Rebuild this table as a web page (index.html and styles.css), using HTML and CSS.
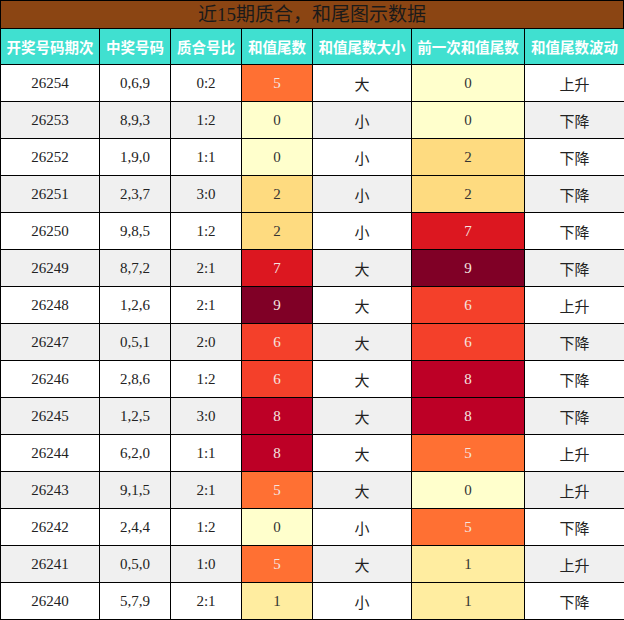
FILE: index.html
```html
<!DOCTYPE html>
<html lang="zh">
<head>
<meta charset="utf-8">
<link rel="stylesheet" href="styles.css">
</head>
<body>
<div class="wrap">
  <div class="title">近15期质合，和尾图示数据</div>
  <table class="grid">
    <colgroup>
      <col class="c1"><col class="c2"><col class="c3"><col class="c4"><col class="c5"><col class="c6"><col class="c7">
    </colgroup>
    <thead>
      <tr><th>开奖号码期次</th><th>中奖号码</th><th>质合号比</th><th>和值尾数</th><th>和值尾数大小</th><th>前一次和值尾数</th><th>和值尾数波动</th></tr>
    </thead>
    <tbody>
      <tr><td>26254</td><td>0,6,9</td><td>0:2</td><td class="v5">5</td><td class="cn">大</td><td class="v0">0</td><td class="cn">上升</td></tr>
      <tr><td>26253</td><td>8,9,3</td><td>1:2</td><td class="v0">0</td><td class="cn">小</td><td class="v0">0</td><td class="cn">下降</td></tr>
      <tr><td>26252</td><td>1,9,0</td><td>1:1</td><td class="v0">0</td><td class="cn">小</td><td class="v2">2</td><td class="cn">下降</td></tr>
      <tr><td>26251</td><td>2,3,7</td><td>3:0</td><td class="v2">2</td><td class="cn">小</td><td class="v2">2</td><td class="cn">下降</td></tr>
      <tr><td>26250</td><td>9,8,5</td><td>1:2</td><td class="v2">2</td><td class="cn">小</td><td class="v7">7</td><td class="cn">下降</td></tr>
      <tr><td>26249</td><td>8,7,2</td><td>2:1</td><td class="v7">7</td><td class="cn">大</td><td class="v9">9</td><td class="cn">下降</td></tr>
      <tr><td>26248</td><td>1,2,6</td><td>2:1</td><td class="v9">9</td><td class="cn">大</td><td class="v6">6</td><td class="cn">上升</td></tr>
      <tr><td>26247</td><td>0,5,1</td><td>2:0</td><td class="v6">6</td><td class="cn">大</td><td class="v6">6</td><td class="cn">下降</td></tr>
      <tr><td>26246</td><td>2,8,6</td><td>1:2</td><td class="v6">6</td><td class="cn">大</td><td class="v8">8</td><td class="cn">下降</td></tr>
      <tr><td>26245</td><td>1,2,5</td><td>3:0</td><td class="v8">8</td><td class="cn">大</td><td class="v8">8</td><td class="cn">下降</td></tr>
      <tr><td>26244</td><td>6,2,0</td><td>1:1</td><td class="v8">8</td><td class="cn">大</td><td class="v5">5</td><td class="cn">上升</td></tr>
      <tr><td>26243</td><td>9,1,5</td><td>2:1</td><td class="v5">5</td><td class="cn">大</td><td class="v0">0</td><td class="cn">上升</td></tr>
      <tr><td>26242</td><td>2,4,4</td><td>1:2</td><td class="v0">0</td><td class="cn">小</td><td class="v5">5</td><td class="cn">下降</td></tr>
      <tr><td>26241</td><td>0,5,0</td><td>1:0</td><td class="v5">5</td><td class="cn">大</td><td class="v1">1</td><td class="cn">上升</td></tr>
      <tr><td>26240</td><td>5,7,9</td><td>2:1</td><td class="v1">1</td><td class="cn">小</td><td class="v1">1</td><td class="cn">下降</td></tr>
    </tbody>
  </table>
</div>
</body>
</html>
```
FILE: styles.css
```css
html, body {
  margin: 0;
  padding: 0;
  background: #ffffff;
}
.wrap {
  width: 624px;
}
.title {
  box-sizing: border-box;
  height: 28px;
  background: #8b4513;
  border: 1px solid #000;
  border-bottom: none;
  color: #1a1a1a;
  font-family: "Liberation Serif", "Noto Sans CJK SC", serif;
  font-size: 19px;
  line-height: 27px;
  text-align: center;
}
.grid {
  width: 624px;
  border-collapse: collapse;
  table-layout: fixed;
  font-family: "Liberation Serif", "Noto Sans CJK SC", serif;
  font-size: 15px;
  color: #222;
}
.c1 { width: 99px; }
.c2 { width: 71px; }
.c3 { width: 71px; }
.c4 { width: 71px; }
.c5 { width: 99px; }
.c6 { width: 113px; }
.c7 { width: 100px; }
.grid th, .grid td {
  border: 1px solid #000;
  padding: 0;
  text-align: center;
  vertical-align: middle;
}
.grid thead tr {
  height: 36px;
}
.grid th {
  background: #40e0d0;
  color: #fff;
  font-family: "Noto Sans CJK SC", sans-serif;
  font-weight: bold;
  font-size: 14.5px;
}
.grid tbody tr {
  height: 37px;
}
.grid tbody tr:nth-child(even) td {
  background: #f0f0f0;
}
.grid tbody tr td.cn {
  font-family: "Noto Sans CJK SC", sans-serif;
  font-size: 15px;
}
.grid tbody tr td.v0 { background: #ffffcc; color: #333; }
.grid tbody tr td.v1 { background: #ffeda0; color: #333; }
.grid tbody tr td.v2 { background: #fedb80; color: #333; }
.grid tbody tr td.v5 { background: #ff7033; color: #f4e6e0; }
.grid tbody tr td.v6 { background: #f4402a; color: #f4e6e0; }
.grid tbody tr td.v7 { background: #dc1720; color: #f4e6e0; }
.grid tbody tr td.v8 { background: #bd0026; color: #f4e6e0; }
.grid tbody tr td.v9 { background: #800026; color: #f4e6e0; }
```
